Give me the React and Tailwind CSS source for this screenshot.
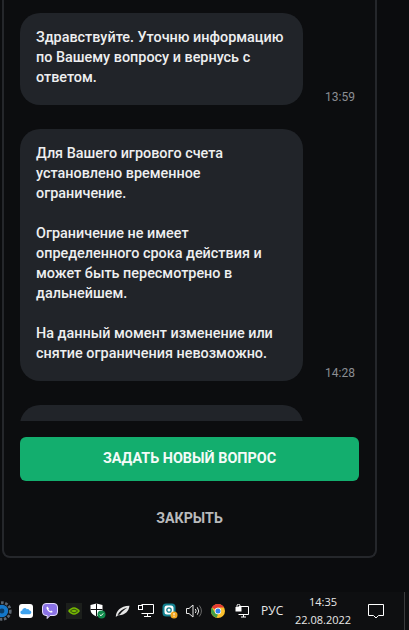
const Bubble = ({ time, children }) => (
  <div className="flex items-end">
    <div className="w-[283px] shrink-0 rounded-[20px] bg-[#212429] px-4 pt-[15px] pb-[17px] text-[14.4px] leading-[20px] font-medium text-[#eeeff0]">
      {children}
    </div>
    <span className="ml-[22px] text-xs leading-4 text-[#8b8e93]">{time}</span>
  </div>
);

const Slot = ({ children }) => (
  <div className="flex h-6 w-6 shrink-0 items-center justify-center">{children}</div>
);

const TrayIcons = () => (
  <div className="ml-[-10px] flex items-center">
    {/* gear */}
    <Slot>
      <svg width="20" height="20" viewBox="0 0 18 18">
        <circle cx="9" cy="9" r="7.5" fill="none" stroke="#5d6670" strokeWidth="2.4" strokeDasharray="2.4 1.4" />
        <circle cx="9" cy="9" r="5.6" fill="#1477c9" />
        <circle cx="9" cy="9" r="2.2" fill="#0b3c66" />
      </svg>
    </Slot>
    {/* icloud */}
    <Slot>
      <svg width="14" height="14" viewBox="0 0 14 14">
        <rect width="14" height="14" rx="3" fill="#fff" />
        <path d="M3.4 10.2a1.9 1.9 0 0 1-.2-3.8 2.5 2.5 0 0 1 4.6-1.2 2 2 0 0 1 2.7 1.4 1.8 1.8 0 0 1 .1 3.6z" fill="#3ea2ee" />
      </svg>
    </Slot>
    {/* viber */}
    <Slot>
      <svg width="16" height="16" viewBox="0 0 16 16">
        <path d="M4 .5h8a3.5 3.5 0 0 1 3.5 3.5v5a3.5 3.5 0 0 1-3.5 3.5H8L5.2 15.5v-3H4A3.5 3.5 0 0 1 .5 9V4A3.5 3.5 0 0 1 4 .5z" fill="#8a72e6" stroke="#e3dcfa" strokeWidth="1" />
        <path d="M5.3 3.4c-.9.5-1 1.4-.6 2.4.7 1.7 1.9 2.9 3.6 3.6 1 .4 1.9.3 2.4-.6l-1.5-1.2-.8.6c-.9-.4-1.6-1.1-2-2l.6-.8z" fill="#fff" />
      </svg>
    </Slot>
    {/* nvidia */}
    <Slot>
      <div className="flex h-4 w-4 items-center justify-center bg-[#1c1f1c]">
        <svg width="12" height="8" viewBox="0 0 12 8">
          <path d="M0 4c2-2.6 4-3.8 6-3.800S10 1.400 12 4c-2 2.600-4 3.800-6 3.800S2 6.600 0 4z" fill="#76b900" />
          <path d="M2.500 4C4 2.700 5 2.300 6 2.300S8 2.700 9.500 4C8 5.300 7 5.700 6 5.700S4 5.300 2.500 4z" fill="none" stroke="#1c1f1c" strokeWidth=".8" />
        </svg>
      </div>
    </Slot>
    {/* defender */}
    <Slot>
      <svg width="16" height="16" viewBox="0 0 16 16">
        <path d="M6.500 0.500 12.500 2v5c0 3-2.500 5-6 6.500C3 12 .5 10 .5 7V2z" fill="#fff" />
        <path d="M6.500.5v13M.5 6.500h12" stroke="#0c0d0f" strokeWidth="1" />
        <circle cx="11.500" cy="11.500" r="4" fill="#108a4b" />
        <path d="M9.700 11.500l1.300 1.300 2.200-2.400" fill="none" stroke="#fff" strokeWidth="1" />
      </svg>
    </Slot>
    {/* leaf */}
    <Slot>
      <svg width="15" height="13" viewBox="0 0 15 13">
        <path d="M.8 12C1 6 5 1.200 14.500.8 14 6 10 10.500 3.500 10.300 2.500 10.500 1.500 11.200.8 12z" fill="#e6e6e6" />
        <path d="M2.500 10C4 6.500 7.500 3.800 12.500 2.400 9 4.500 6.500 7 4.800 9.500z" fill="#101113" />
      </svg>
    </Slot>
    {/* network */}
    <Slot>
      <svg width="16" height="14" viewBox="0 0 16 14" fill="none" stroke="#fff" strokeWidth="1">
        <path d="M3.500.5h12v9h-12M9.500 9.500v3M6 12.500h7" />
        <rect x=".5" y="1.500" width="4" height="4" fill="#0c0d0f" />
      </svg>
    </Slot>
    {/* eset */}
    <Slot>
      <svg width="16" height="16" viewBox="0 0 16 16">
        <rect x=".5" y=".5" width="13" height="13" rx="3.500" fill="#12808f" />
        <rect x="2.500" y="2.500" width="9" height="9" rx="2.500" fill="#fff" />
        <circle cx="7" cy="7" r="2.200" fill="none" stroke="#12808f" strokeWidth="1.300" />
        <circle cx="12" cy="12" r="3.500" fill="#f0a51e" />
        <path d="M12 10v2.400M12 13.200v.8" stroke="#fff" strokeWidth="1" />
      </svg>
    </Slot>
    {/* volume */}
    <Slot>
      <svg width="16" height="14" viewBox="0 0 16 14" fill="none" stroke="#e8e8e8" strokeWidth="1">
        <path d="M.5 4.500h2.500L7 1v12L3 9.500H.5z" />
        <path d="M9.300 5a3 3 0 0 1 0 4M11.300 3.300a6 6 0 0 1 0 7.400" />
        <path d="M13.300 1.500a9 9 0 0 1 0 11" stroke="#6b6b6b" />
      </svg>
    </Slot>
    {/* chrome */}
    <Slot>
      <svg width="14" height="14" viewBox="0 0 14 14">
        <circle cx="7" cy="7" r="7" fill="#fbc02d" />
        <path d="M7 0a7 7 0 0 1 6.060 3.500H7A3.500 3.500 0 0 0 3.970 5.250L.94 3.500A7 7 0 0 1 7 0z" fill="#e53935" />
        <path d="M.94 3.500 3.970 8.750A3.500 3.500 0 0 0 7 10.500L5.500 13.840A7 7 0 0 1 .94 3.500z" fill="#43a047" />
        <circle cx="7" cy="7" r="3.200" fill="#fff" />
        <circle cx="7" cy="7" r="2.500" fill="#2f80ed" />
      </svg>
    </Slot>
    {/* network lock */}
    <Slot>
      <svg width="14" height="14" viewBox="0 0 14 14" fill="none">
        <path d="M3.500 2.500h10v8h-10M8.500 10.500v2.500M6 13h5" stroke="#fff" strokeWidth="1" />
        <rect x=".5" y="3" width="6" height="4.500" fill="#fff" />
        <path d="M2 3V1.800a1.500 1.500 0 0 1 3 0V3" stroke="#fff" strokeWidth="1" />
      </svg>
    </Slot>
  </div>
);

export default function App() {
  return (
    <div className="flex h-[630px] w-[409px] flex-col overflow-hidden bg-[#0b0c0e] font-['Roboto',sans-serif]">
      {/* Chat panel */}
      <div className="ml-[2px] flex h-[558px] w-[375px] shrink-0 flex-col rounded-b-lg border-x-2 border-b-2 border-[#25272b] bg-[#0c0d0f]">
        <div className="flex h-[421px] shrink-0 flex-col gap-6 overflow-hidden pt-[13px] pl-[16px]">
          <Bubble time="13:59">
            <p>Здравствуйте. Уточню информацию по Вашему вопросу и вернусь с ответом.</p>
          </Bubble>
          <Bubble time="14:28">
            <p>Для Вашего игрового счета установлено временное ограничение.</p>
            <p className="mt-5">Ограничение не имеет определенного срока действия и может быть пересмотрено в дальнейшем.</p>
            <p className="mt-5">На данный момент изменение или снятие ограничения невозможно.</p>
          </Bubble>
          <div className="h-[60px] w-[283px] shrink-0 rounded-[20px] bg-[#212429]" />
        </div>
        <button className="mt-4 ml-[16px] h-11 w-[339px] shrink-0 rounded-md bg-[#13ae6e] text-[14.4px] font-bold text-[#f4fbf8]">
          ЗАДАТЬ НОВЫЙ ВОПРОС
        </button>
        <button className="mt-[27px] ml-[16px] w-[339px] text-[14.2px] leading-5 font-bold text-[#b9babc]">ЗАКРЫТЬ</button>
      </div>

      {/* Taskbar */}
      <div className="mt-[34px] flex h-[38px] items-center bg-[#0e0f11] font-['Open_Sans',sans-serif] text-xs text-[#e8e8e8]">
        <TrayIcons />
        <span className="ml-[7px] w-[24px] shrink-0 text-[12px]">РУС</span>
        <div className="ml-[10px] flex w-[56px] shrink-0 flex-col items-center text-[11px] leading-[18px]">
          <span>14:35</span>
          <span>22.08.2022</span>
        </div>
        <svg className="ml-[17px] shrink-0" width="16" height="16" viewBox="0 0 16 16" fill="none" stroke="#fff" strokeWidth="1">
          <path d="M.5 1.500h15v11h-5L8 15l-2.500-2.500h-5z" />
        </svg>
        <div className="ml-[20px] h-full w-px bg-[#3a3b3d]" />
      </div>
    </div>
  );
}
